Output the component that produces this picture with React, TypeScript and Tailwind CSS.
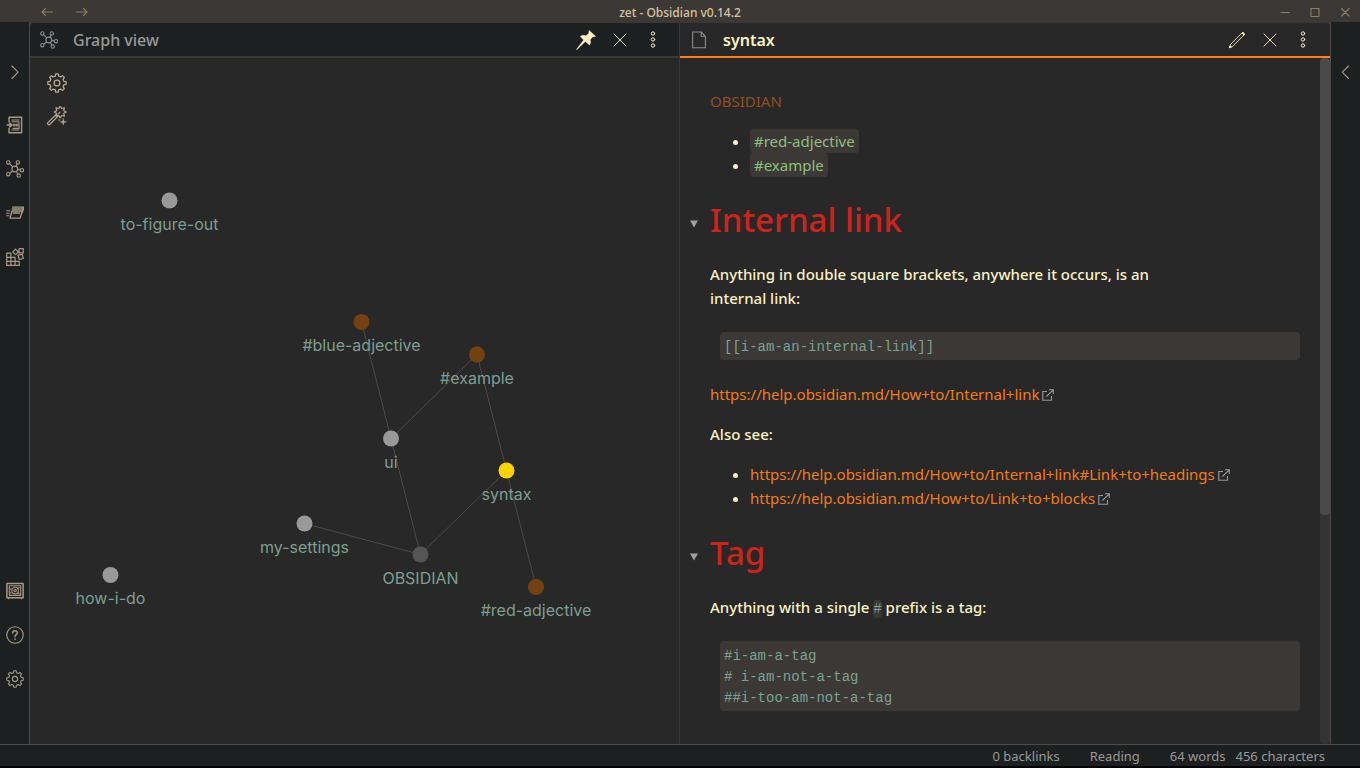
import type { ReactNode } from "react";

const UI_FONT = "font-['Noto_Sans','Open_Sans',sans-serif]";

function starPath(cx: number, cy: number, points: number, outer: number, inner: number) {
  const pts = Array.from({ length: points * 2 }, (_, i) => {
    const r = i % 2 ? inner : outer;
    const t = (i * Math.PI) / points - Math.PI / 2;
    return `${(cx + r * Math.cos(t)).toFixed(2)} ${(cy + r * Math.sin(t)).toFixed(2)}`;
  });
  return `M${pts.join("L")}Z`;
}

function gearPath(teeth: number, outer: number, inner: number) {
  const pts: string[] = [];
  const step = (Math.PI * 2) / teeth;
  for (let i = 0; i < teeth; i++) {
    const a = i * step - Math.PI / 2;
    const at = (r: number, t: number) =>
      `${(9 + r * Math.cos(t)).toFixed(2)} ${(9 + r * Math.sin(t)).toFixed(2)}`;
    pts.push(at(inner, a - step * 0.3), at(outer, a - step * 0.18), at(outer, a + step * 0.18), at(inner, a + step * 0.3));
  }
  return `M${pts.join("L")}Z`;
}

type IconProps = { className?: string; children: ReactNode; box?: string };

function Icon({ className = "size-[18px]", children, box = "0 0 18 18" }: IconProps) {
  return (
    <svg
      className={className}
      viewBox={box}
      fill="none"
      stroke="currentColor"
      strokeWidth="1.1"
      strokeLinecap="round"
      strokeLinejoin="round"
      aria-hidden="true"
    >
      {children}
    </svg>
  );
}

const GearIcon = ({ className }: { className?: string }) => (
  <Icon className={className}>
    <path d={gearPath(8, 8.3, 6.4)} />
    <circle cx="9" cy="9" r="2.6" />
  </Icon>
);

const NetIcon = ({ className }: { className?: string }) => (
  <Icon className={className}>
    <circle cx="8.8" cy="9" r="2.9" />
    <circle cx="2.3" cy="2.4" r="1.7" />
    <circle cx="11.8" cy="2.4" r="1.7" />
    <circle cx="15.9" cy="10.2" r="1.7" />
    <circle cx="12.7" cy="15.6" r="1.7" />
    <circle cx="2.3" cy="14.2" r="1.7" />
    <path d="M3.6 3.6 6.6 6.9M11.1 4 10 6.4M11.7 9.4 14.2 9.9M10.4 11.5 11.8 14M6.6 11 3.7 13.2" />
  </Icon>
);

const WandIcon = () => (
  <Icon className="size-5" box="0 0 20 20">
    <path d="M.9 16.7 9 8.6l1.8 1.8-8.1 8.1c-1.2 1.1-2.8-.7-1.8-1.8Z" />
    <path d={starPath(13.2, 6, 8, 6, 3.7)} />
    <path d="M11.4 7.8 13 6.2" />
    <path d={starPath(16.2, 15.9, 4, 3.3, 0.9)} fill="currentColor" strokeWidth=".4" />
    <circle cx="12" cy="14" r=".6" fill="currentColor" strokeWidth=".3" />
  </Icon>
);

const SwitcherIcon = () => (
  <Icon>
    <path d="M3 6V1.2h12.6v15.6H3v-4.3" strokeWidth="1.4" />
    <path d="M6 4h7M6 5.7h7M6 14h7M7 12.4h6V5.7" />
    <path d="M1 9h3M3.8 7.2 6 9l-2.2 1.9Z" strokeWidth="1.5" />
    <circle cx="8.2" cy="9" r="1" />
    <circle cx="11" cy="9" r="1" />
  </Icon>
);

const CardsIcon = () => (
  <Icon>
    <path d="M6 7h10.2l-2 7.2H4Z" strokeWidth="1.3" />
    <path d="M6.3 5h10.9l-1 3.6M6.6 3.1h10.8v3M7.3 9h6.3" strokeWidth="1.3" />
    <path d="M.7 6.8h3.2M.7 9.3h2.6M.7 11.8H3" />
  </Icon>
);

const BlocksIcon = () => (
  <Icon>
    <path d="M.7 5.2h4.2v4.1h4.2v4.1h4.2v4H.7ZM.7 9.3h4.2M.7 13.4h8.4M4.9 9.3v8.1M9.1 13.4v4" strokeWidth="1.2" />
    <path d="m9.4 1.1 2.9 2.7-2.5 2.9-3-2.6ZM13.1.7h4.2v4.2h-4.2ZM12 7.2l4.3-.9 1 4.2-4 .9Z" strokeWidth="1.2" />
  </Icon>
);

const VaultIcon = () => (
  <Icon>
    <path d="M.9 1.5h16.2v14.2H.9Z" strokeWidth="1.5" />
    <path d="M3.3 3.8h11.4v9.6H3.3Z" />
    <circle cx="9.2" cy="8.6" r="3.3" />
    <circle cx="9.2" cy="8.6" r="1.2" />
    <path d="M4.9 6.2v1.2M4.9 10v1.2M13.2 5.5l-1.5 1M13.2 11.8l-1.5-1M2.5 15.7v1M15.5 15.7v1" />
  </Icon>
);

const HelpIcon = () => (
  <Icon>
    <circle cx="9" cy="9" r="8.2" />
    <path d="M6.7 7c0-3.1 4.7-3 4.7-.2C11.4 8.6 9 8.7 9 10.8M9 13v.4" strokeWidth="1.5" />
  </Icon>
);

const PinIcon = () => (
  <Icon className="size-5" box="0 0 20 20">
    <path
      d="M13.4.4 19.6 6.3c-1 .7-2 .8-2.8.5l-2.6 3c.8 2.1.6 3.9-.8 5.4l-4-3.6L.8 19.8.3 19.4l7.3-9.3L4.3 6.5c1.4-1.4 3.5-1.6 5.5-.8l3.1-2.5c-.3-1-.2-2 .5-2.8Z"
      fill="currentColor"
      strokeWidth=".3"
    />
  </Icon>
);

const CloseIcon = () => (
  <Icon>
    <path d="m3 3 12 12M15 3 3 15" strokeWidth=".9" />
  </Icon>
);

const MoreIcon = () => (
  <Icon>
    <g strokeWidth="1">
      <circle cx="9" cy="2.5" r="1.7" />
      <circle cx="9" cy="8.5" r="1.7" />
      <circle cx="9" cy="14.5" r="1.7" />
    </g>
  </Icon>
);

const PencilIcon = () => (
  <Icon>
    <path d="M1.7 16.3 2.4 13.5 14.2 1.7c1-1 3 1 2 2L4.5 15.5Z" strokeWidth=".9" />
    <path d="m1.7 16.3 1-1M14.6 2.2l1.2 1.2" strokeWidth="1.6" />
  </Icon>
);

const FileIcon = () => (
  <Icon>
    <path d="M2.6 1h8.6l4.2 4.3v11.4H2.6ZM11.2 1v4.3h4.2" />
  </Icon>
);

const ExternalIcon = () => (
  <svg className="ml-[3px] inline size-3 align-[-1px] text-[#999]" viewBox="0 0 12 12" fill="none" stroke="currentColor" aria-hidden="true">
    <path d="M5 2.5H.8v8.7h8.7V7M7 .7h4.3V5M11.2.8 4.5 7.5" strokeWidth="1.1" />
  </svg>
);

function IconButton({ label, className, children }: { label: string; className: string; children: ReactNode }) {
  return (
    <button type="button" aria-label={label} className={`flex shrink-0 items-center justify-center ${className}`}>
      {children}
    </button>
  );
}

const nodes = [
  { id: "to-figure-out", x: 139.5, y: 142.5, fill: "#999999" },
  { id: "#blue-adjective", x: 331.5, y: 264, fill: "#744210" },
  { id: "#example", x: 447, y: 296.5, fill: "#744210" },
  { id: "ui", x: 361, y: 380.5, fill: "#999999" },
  { id: "syntax", x: 476.5, y: 412.5, fill: "#f8d500" },
  { id: "my-settings", x: 274.5, y: 465.5, fill: "#999999" },
  { id: "OBSIDIAN", x: 390.5, y: 496.5, fill: "#555555" },
  { id: "#red-adjective", x: 506, y: 529, fill: "#744210" },
  { id: "how-i-do", x: 80.5, y: 517, fill: "#999999" },
];

const edges = [
  ["#blue-adjective", "ui"],
  ["#example", "ui"],
  ["#example", "syntax"],
  ["ui", "OBSIDIAN"],
  ["syntax", "OBSIDIAN"],
  ["my-settings", "OBSIDIAN"],
  ["syntax", "#red-adjective"],
];

function Graph() {
  const find = (id: string) => nodes.find((n) => n.id === id)!;
  return (
    <svg className="absolute inset-0 size-full font-['Inter',sans-serif] text-base" role="img" aria-label="Graph of notes">
      {edges.map(([from, to]) => {
        const a = find(from);
        const b = find(to);
        return <line key={from + to} x1={a.x} y1={a.y} x2={b.x} y2={b.y} stroke="#504945" />;
      })}
      {nodes.map((n) => (
        <g key={n.id}>
          <circle cx={n.x} cy={n.y} r="8" fill={n.fill} />
          <text x={n.x} y={n.y + 29} textAnchor="middle" fill="#7c9f91">
            {n.id}
          </text>
        </g>
      ))}
    </svg>
  );
}

function Heading({ children }: { children: ReactNode }) {
  return (
    <h1 className="relative mt-[23px] mb-[22px] text-[33px] leading-10 font-medium text-[#cc241d]">
      <svg className="absolute top-5 -left-5 size-2" viewBox="0 0 8 8" fill="#a0a0a0" aria-hidden="true">
        <path d="M0 .5h8L4 7.5Z" />
      </svg>
      {children}
    </h1>
  );
}

function Code({ children }: { children: ReactNode }) {
  return (
    <pre className="my-[22px] ml-[10px] rounded bg-[#3c3836] px-1 pt-[5px] pb-0.5 font-['Liberation_Mono',monospace] text-sm leading-[21px] text-[#7ba293]">
      {children}
    </pre>
  );
}

function ExternalLink({ href }: { href: string }) {
  return (
    <>
      <a href={href} className="text-[#f27c1b]">
        {href}
      </a>
      <ExternalIcon />
    </>
  );
}

function Tag({ children }: { children: string }) {
  return (
    <a href={children} className="rounded bg-[#3c3836] px-1 py-0.5 text-[#8ec07c]">
      {children}
    </a>
  );
}

export default function App() {
  return (
    <div className={`flex h-screen flex-col overflow-hidden bg-black pb-0.5 text-[15px] ${UI_FONT}`}>
      <header className="flex h-[22px] shrink-0 items-center bg-[#3c3836] text-[#8a8063]">
        <div className="flex flex-1 gap-[21px] pt-0.5">
          <IconButton label="Back" className="ml-10 h-5 w-[14px]">
            <Icon className="size-3" box="0 0 12 12"><path d="M11.5 6H1M4.5 2.5 1 6l3.5 3.5" /></Icon>
          </IconButton>
          <IconButton label="Forward" className="h-5 w-[14px]">
            <Icon className="size-3" box="0 0 12 12"><path d="M.5 6H11M7.5 2.5 11 6 7.5 9.5" /></Icon>
          </IconButton>
        </div>
        <span className="pt-1 text-xs font-medium text-[#d5c4a1]">zet - Obsidian v0.14.2</span>
        <div className="flex flex-1 justify-end pt-0.5">
          <IconButton label="Minimize" className="h-5 w-[30px]">
            <Icon className="size-3" box="0 0 12 12"><path d="M2 6.5h8" /></Icon>
          </IconButton>
          <IconButton label="Maximize" className="h-5 w-[30px]">
            <Icon className="size-3" box="0 0 12 12"><path d="M2 2.5h8v8H2Z" /></Icon>
          </IconButton>
          <IconButton label="Close" className="h-5 w-[30px]">
            <Icon className="size-3" box="0 0 12 12"><path d="m2.5 2.5 7.5 7.5M10 2.5 2.5 10" /></Icon>
          </IconButton>
        </div>
      </header>

      <div className="flex min-h-0 flex-1">
        <nav className="flex w-[30px] shrink-0 flex-col border-r border-[#504945] bg-[#1d2021] pt-[39px] pb-[43px] text-[#a89984]">
          <IconButton label="Expand left sidebar" className="mb-5 h-[22px]">
            <Icon><path d="m6 3 6 6.2L6 15.5" /></Icon>
          </IconButton>
          <IconButton label="Open quick switcher" className="h-11"><SwitcherIcon /></IconButton>
          <IconButton label="Open graph view" className="h-11"><NetIcon /></IconButton>
          <IconButton label="Open cards" className="h-11"><CardsIcon /></IconButton>
          <IconButton label="Open blocks" className="mb-auto h-11"><BlocksIcon /></IconButton>
          <IconButton label="Open another vault" className="h-11"><VaultIcon /></IconButton>
          <IconButton label="Help" className="h-11"><HelpIcon /></IconButton>
          <IconButton label="Settings" className="h-11"><GearIcon /></IconButton>
        </nav>

        <section className="flex min-w-0 basis-1/2 flex-col border-r border-[#3c3836] bg-[#3c3836]">
          <div className="mt-px flex h-[35px] shrink-0 items-center rounded-tl border-b-2 border-[#3c3836] bg-[#1d2021] px-[10px] text-[#fbf1c7]">
            <span className="text-[#8b8b8b]"><NetIcon /></span>
            <h2 className="ml-[15px] flex-1 text-base font-medium text-[#999]">Graph view</h2>
            <IconButton label="Unpin" className="w-[34px]"><PinIcon /></IconButton>
            <IconButton label="Close" className="w-[34px]"><CloseIcon /></IconButton>
            <IconButton label="More options" className="w-8"><MoreIcon /></IconButton>
          </div>
          <div className="relative flex-1 bg-[#282828]">
            <Graph />
            <div className="relative flex w-[54px] flex-col items-center pt-2 text-[#bdae93]">
              <IconButton label="Graph settings" className="size-[34px]"><GearIcon className="size-5" /></IconButton>
              <IconButton label="Animate" className="h-8 w-[34px]"><WandIcon /></IconButton>
            </div>
          </div>
        </section>

        <section className="flex min-w-0 basis-1/2 flex-col bg-[#3c3836]">
          <div className="mt-px flex h-[35px] shrink-0 items-center rounded-tr border-b-2 border-[#fe8019] bg-[#282828] pr-[11px] pl-[10px] text-[#fbf1c7]">
            <span className="text-[#8b8b8b]"><FileIcon /></span>
            <h2 className="ml-[15px] flex-1 text-base font-semibold">syntax</h2>
            <IconButton label="Edit" className="w-[33px]"><PencilIcon /></IconButton>
            <IconButton label="Close" className="w-[33px]"><CloseIcon /></IconButton>
            <IconButton label="More options" className="w-[33px]"><MoreIcon /></IconButton>
          </div>
          <div className="flex min-h-0 flex-1 bg-[#282828]">
            <article className="min-w-0 flex-1 overflow-hidden pt-[31px] pr-5 pl-[30px] leading-6 font-medium text-[#fbf1c7]">
              <p className="font-normal"><a href="#OBSIDIAN" className="text-[#8f5020]">OBSIDIAN</a></p>
              <ul className="mt-4 list-disc pl-10 font-normal">
                <li><Tag>#red-adjective</Tag></li>
                <li><Tag>#example</Tag></li>
              </ul>
              <Heading>Internal link</Heading>
              <p>
                Anything in double square brackets, anywhere it occurs, is an
                <br />
                internal link:
              </p>
              <Code>[[i-am-an-internal-link]]</Code>
              <p className="font-normal"><ExternalLink href="https://help.obsidian.md/How+to/Internal+link" /></p>
              <p className="my-4">Also see:</p>
              <ul className="list-disc pl-10 font-normal">
                <li><ExternalLink href="https://help.obsidian.md/How+to/Internal+link#Link+to+headings" /></li>
                <li><ExternalLink href="https://help.obsidian.md/How+to/Link+to+blocks" /></li>
              </ul>
              <Heading>Tag</Heading>
              <p>
                Anything with a single{" "}
                <code className="rounded bg-[#3c3836] py-px font-['Liberation_Mono',monospace] text-sm text-[#7ba293]">#</code>{" "}
                prefix is a tag:
              </p>
              <Code>{"#i-am-a-tag\n# i-am-not-a-tag\n##i-too-am-not-a-tag"}</Code>
            </article>
            <div className="w-[10px] shrink-0 rounded bg-[#333]">
              <div className="h-2/3 rounded bg-[#4a4a4a]" />
            </div>
          </div>
        </section>

        <aside className="flex w-[30px] shrink-0 flex-col border-l border-[#504945] bg-[#1d2021] pt-[39px] text-[#a89984]">
          <IconButton label="Expand right sidebar" className="h-[22px]">
            <Icon><path d="M11.5 3 5.3 9.2l6.2 6.3" /></Icon>
          </IconButton>
        </aside>
      </div>

      <footer className="flex h-[22px] shrink-0 items-center justify-end border-t border-[#504945] bg-[#1d2021] pt-0.5 pr-[35px] text-[13px] text-[#999]">
        <span className="mr-[30px]">0 backlinks</span>
        <span className="mr-[30px]">Reading</span>
        <span className="mr-[10px]">64 words</span>
        <span>456 characters</span>
      </footer>
    </div>
  );
}
